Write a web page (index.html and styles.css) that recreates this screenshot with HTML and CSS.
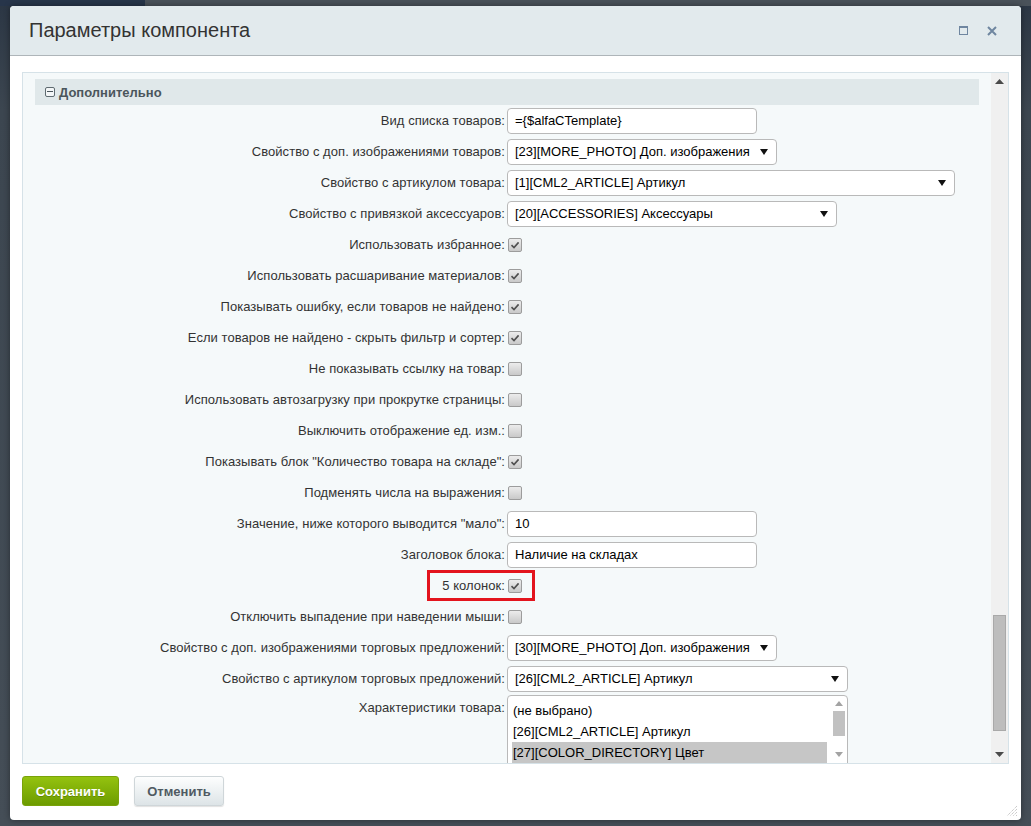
FILE: index.html
```html
<!DOCTYPE html>
<html>

<head>
    <meta charset="UTF-8" />
    <meta name="viewport" content="width=device-width, initial-scale=1.0">
    <title>Параметры компонента</title>
    <link rel="stylesheet" href="styles.css">
</head>

<body>
    <!-- окно диалога -->
    <div class="dialog">
        <div class="dlg-head">
            <span class="dlg-title">Параметры компонента</span>
            <span class="dlg-icons">
                <span class="ico-max"></span>
                <svg class="ico-close" width="10" height="10" viewBox="0 0 10 10"><path d="M1 1 L9 9 M9 1 L1 9" stroke="#6f86a0" stroke-width="2" fill="none"/></svg>
            </span>
        </div>

        <div class="dlg-body">
            <div class="panel">
                <div class="panel-inner">
                    <div class="sect">
                        <span class="minus"></span>Дополнительно
                    </div>

                    <div class="row">
                        <label>Вид списка товаров:</label>
                        <input class="txt w250" type="text" value="={$alfaCTemplate}">
                    </div>
                    <div class="row">
                        <label>Свойство с доп. изображениями товаров:</label>
                        <div class="sel w270">[23][MORE_PHOTO] Доп. изображения<svg class="arr" width="8" height="6" viewBox="0 0 8 6"><polygon points="0,0 8,0 4,6" fill="#111"/></svg></div>
                    </div>
                    <div class="row">
                        <label>Свойство с артикулом товара:</label>
                        <div class="sel w448">[1][CML2_ARTICLE] Артикул<svg class="arr" width="8" height="6" viewBox="0 0 8 6"><polygon points="0,0 8,0 4,6" fill="#111"/></svg></div>
                    </div>
                    <div class="row">
                        <label>Свойство с привязкой аксессуаров:</label>
                        <div class="sel w330">[20][ACCESSORIES] Аксессуары<svg class="arr" width="8" height="6" viewBox="0 0 8 6"><polygon points="0,0 8,0 4,6" fill="#111"/></svg></div>
                    </div>
                    <div class="row">
                        <label>Использовать избранное:</label>
                        <span class="chk on"></span>
                    </div>
                    <div class="row">
                        <label>Использовать расшаривание материалов:</label>
                        <span class="chk on"></span>
                    </div>
                    <div class="row">
                        <label>Показывать ошибку, если товаров не найдено:</label>
                        <span class="chk on"></span>
                    </div>
                    <div class="row">
                        <label>Если товаров не найдено - скрыть фильтр и сортер:</label>
                        <span class="chk on"></span>
                    </div>
                    <div class="row">
                        <label>Не показывать ссылку на товар:</label>
                        <span class="chk"></span>
                    </div>
                    <div class="row">
                        <label>Использовать автозагрузку при прокрутке страницы:</label>
                        <span class="chk"></span>
                    </div>
                    <div class="row">
                        <label>Выключить отображение ед. изм.:</label>
                        <span class="chk"></span>
                    </div>
                    <div class="row">
                        <label>Показывать блок "Количество товара на складе":</label>
                        <span class="chk on"></span>
                    </div>
                    <div class="row">
                        <label>Подменять числа на выражения:</label>
                        <span class="chk"></span>
                    </div>
                    <div class="row">
                        <label>Значение, ниже которого выводится "мало":</label>
                        <input class="txt w250" type="text" value="10">
                    </div>
                    <div class="row">
                        <label>Заголовок блока:</label>
                        <input class="txt w250" type="text" value="Наличие на складах">
                    </div>
                    <div class="row marked">
                        <label>5 колонок:</label>
                        <span class="chk on"></span>
                        <span class="mark"></span>
                    </div>
                    <div class="row">
                        <label>Отключить выпадение при наведении мыши:</label>
                        <span class="chk"></span>
                    </div>
                    <div class="row">
                        <label>Свойство с доп. изображениями торговых предложений:</label>
                        <div class="sel w270">[30][MORE_PHOTO] Доп. изображения<svg class="arr" width="8" height="6" viewBox="0 0 8 6"><polygon points="0,0 8,0 4,6" fill="#111"/></svg></div>
                    </div>
                    <div class="row">
                        <label>Свойство с артикулом торговых предложений:</label>
                        <div class="sel w341">[26][CML2_ARTICLE] Артикул<svg class="arr" width="8" height="6" viewBox="0 0 8 6"><polygon points="0,0 8,0 4,6" fill="#111"/></svg></div>
                    </div>
                    <div class="row row-list">
                        <label>Характеристики товара:</label>
                        <div class="list">
                            <div class="opts">
                                <div class="opt">(не выбрано)</div>
                                <div class="opt">[26][CML2_ARTICLE] Артикул</div>
                                <div class="opt selected">[27][COLOR_DIRECTORY] Цвет</div>
                            </div>
                            <div class="list-bar">
                                <svg width="8" height="5" viewBox="0 0 8 5"><polygon points="0,5 8,5 4,0" fill="#a3a3a3"/></svg>
                                <span class="list-thumb"></span>
                                <span class="list-gap"></span>
                                <svg width="8" height="5" viewBox="0 0 8 5"><polygon points="0,0 8,0 4,5" fill="#a3a3a3"/></svg>
                            </div>
                        </div>
                    </div>
                </div>

                <!-- полоса прокрутки -->
                <div class="vbar">
                    <span class="vbar-btn"><svg width="9" height="5" viewBox="0 0 9 5"><polygon points="0,5 9,5 4.5,0" fill="#4a4a4a"/></svg></span>
                    <span class="vbar-track"><span class="vbar-thumb"></span></span>
                    <span class="vbar-btn"><svg width="9" height="5" viewBox="0 0 9 5"><polygon points="0,0 9,0 4.5,5" fill="#4a4a4a"/></svg></span>
                </div>
            </div>
        </div>

        <div class="dlg-foot">
            <button class="btn btn-save">Сохранить</button>
            <button class="btn btn-cancel">Отменить</button>
        </div>

        <svg class="grip" width="12" height="12" viewBox="0 0 12 12">
            <path d="M11 1 L1 11 M11 4 L4 11 M11 7 L7 11 M11 10 L10 11" stroke="#b5b5b5" stroke-width="1" stroke-dasharray="1 1" fill="none"/>
        </svg>
    </div>
</body>

</html>
```

FILE: styles.css
```css
* {
    margin: 0;
    padding: 0;
    box-sizing: border-box;
}

body {
    width: 1031px;
    height: 826px;
    overflow: hidden;
    font-family: "Liberation Sans", Arial, sans-serif;
    font-size: 13px;
    color: #333;
    /* тёмный фон страницы под окном */
    background: linear-gradient(to right, #27354a 0, #27354a 145px, #4a525a 145px) top left / 100% 6px no-repeat,
        linear-gradient(to bottom, #2b3644 0, #3c4650 110px, #454e57 100%);
    padding: 6px 10px;
}

/* окно */
.dialog {
    position: relative;
    width: 1011px;
    height: 814px;
    background: #fff;
    border-radius: 4px;
    overflow: hidden;
    display: flex;
    flex-direction: column;
    box-shadow: 0 0 6px rgba(0, 0, 0, 0.4);
}

.dlg-head {
    height: 50px;
    flex: none;
    background: #e2eaed;
    border-bottom: 1px solid #aeb5b9;
    display: flex;
    align-items: center;
    justify-content: space-between;
    padding: 0 24px 0 19px;
}

.dlg-title {
    font-size: 20px;
    color: #333;
}

.dlg-icons {
    display: flex;
    align-items: center;
    gap: 19px;
}

.ico-max {
    display: block;
    width: 9px;
    height: 9px;
    border: 1px solid #6f86a0;
    border-top-width: 2px;
}

.ico-close {
    display: block;
}

.dlg-body {
    padding: 16px 12px 0 12px;
}

/* панель с параметрами */
.panel {
    height: 692px;
    border: 1px solid #d6e2e8;
    background: #f5f9fa;
    display: flex;
    overflow: hidden;
}

.panel-inner {
    flex: 1;
    padding: 6px 12px 0 12px;
    overflow: hidden;
}

.sect {
    height: 26px;
    background: #e0e8ea;
    display: flex;
    align-items: center;
    padding-left: 10px;
    font-weight: bold;
    color: #4b565c;
}

.minus {
    position: relative;
    width: 10px;
    height: 10px;
    border: 1px solid #5f6b71;
    border-radius: 2px;
    margin-right: 4px;
    background: #f3f6f7;
}

.minus::after {
    content: "";
    position: absolute;
    left: 1px;
    right: 1px;
    top: 3px;
    height: 1px;
    background: #4b565c;
}

/* строки формы */
.row {
    position: relative;
    display: grid;
    grid-template-columns: 470px 1fr;
    column-gap: 2px;
    height: 31px;
    align-items: center;
}

.row:first-of-type {
    margin-top: -1px;
}

.row label {
    text-align: right;
    white-space: nowrap;
    color: #333;
    letter-spacing: 0.05px;
}

.txt,
.sel {
    height: 26px;
    border: 1px solid #b9b9b9;
    border-radius: 4px;
    background: #fff;
    font-family: "Liberation Sans", Arial, sans-serif;
    font-size: 13px;
    color: #000;
    padding: 0 8px 0 7px;
}

.txt {
    outline: none;
}

.sel {
    display: flex;
    align-items: center;
    justify-content: space-between;
    white-space: nowrap;
}

.arr {
    flex: none;
}

.w250 { width: 250px; }
.w270 { width: 270px; }
.w330 { width: 330px; }
.w341 { width: 341px; }
.w448 { width: 448px; }

/* флажок */
.chk {
    display: block;
    width: 14px;
    height: 14px;
    margin-left: 1px;
    border: 1px solid #9c9c9c;
    border-radius: 2px;
    background: linear-gradient(#ececec, #c9c9c9);
}

.chk.on {
    background: url("data:image/svg+xml;utf8,<svg xmlns='http://www.w3.org/2000/svg' width='12' height='12' viewBox='0 0 12 12'><path d='M2.5 6.2 L5 8.6 L9.6 3.4' stroke='%23505050' stroke-width='1.6' fill='none'/></svg>") center no-repeat,
        linear-gradient(#ececec, #c9c9c9);
}

/* красная рамка */
.mark {
    position: absolute;
    left: 392px;
    top: 0;
    width: 108px;
    height: 31px;
    border: 3px solid #e3141d;
}

/* список */
.row-list {
    height: 72px;
    align-items: start;
}

.row-list label {
    padding-top: 6px;
}

.list {
    width: 341px;
    height: 69px;
    margin-top: 1px;
    border: 1px solid #b9b9b9;
    border-radius: 4px 4px 0 0;
    background: #fff;
    display: flex;
    padding: 4px 0 0 4px;
    overflow: hidden;
}

.opts {
    width: 315px;
}

.opt {
    height: 21px;
    line-height: 21px;
    padding-left: 1px;
    color: #000;
    white-space: nowrap;
}

.opt.selected {
    background: #c6c6c6;
}

.list-bar {
    width: 16px;
    margin-left: 4px;
    margin-top: -3px;
    display: flex;
    flex-direction: column;
    align-items: center;
    padding-top: 4px;
}

.list-thumb {
    width: 12px;
    height: 25px;
    margin-top: 5px;
    background: #c1c1c1;
}

.list-gap {
    height: 16px;
}

/* полоса прокрутки панели */
.vbar {
    width: 17px;
    background: #f0f0f0;
    display: flex;
    flex-direction: column;
}

.vbar-btn {
    height: 17px;
    display: flex;
    align-items: center;
    justify-content: center;
}

.vbar-track {
    flex: 1;
}

.vbar-thumb {
    display: block;
    width: 13px;
    height: 116px;
    margin: 525px 0 0 2px;
    background: #bdbdbd;
    border: 1px solid #a9a9a9;
}

/* кнопки */
.dlg-foot {
    padding: 12px;
    display: flex;
    gap: 15px;
}

.btn {
    height: 30px;
    border-radius: 3px;
    font-family: "Liberation Sans", Arial, sans-serif;
    font-size: 13px;
    font-weight: bold;
    cursor: pointer;
}

.btn-save {
    width: 97px;
    color: #fff;
    border: 1px solid #79a20a;
    background: linear-gradient(#94c20f, #6d9c00);
    text-shadow: 0 1px 0 rgba(0, 0, 0, 0.2);
}

.btn-cancel {
    width: 90px;
    color: #4f5a62;
    border: 1px solid #cfd6d9;
    background: linear-gradient(#fdfefe, #dde4e7);
    box-shadow: 0 1px 1px rgba(0, 0, 0, 0.12);
}

/* уголок изменения размера */
.grip {
    position: absolute;
    right: 3px;
    bottom: 3px;
}
```
